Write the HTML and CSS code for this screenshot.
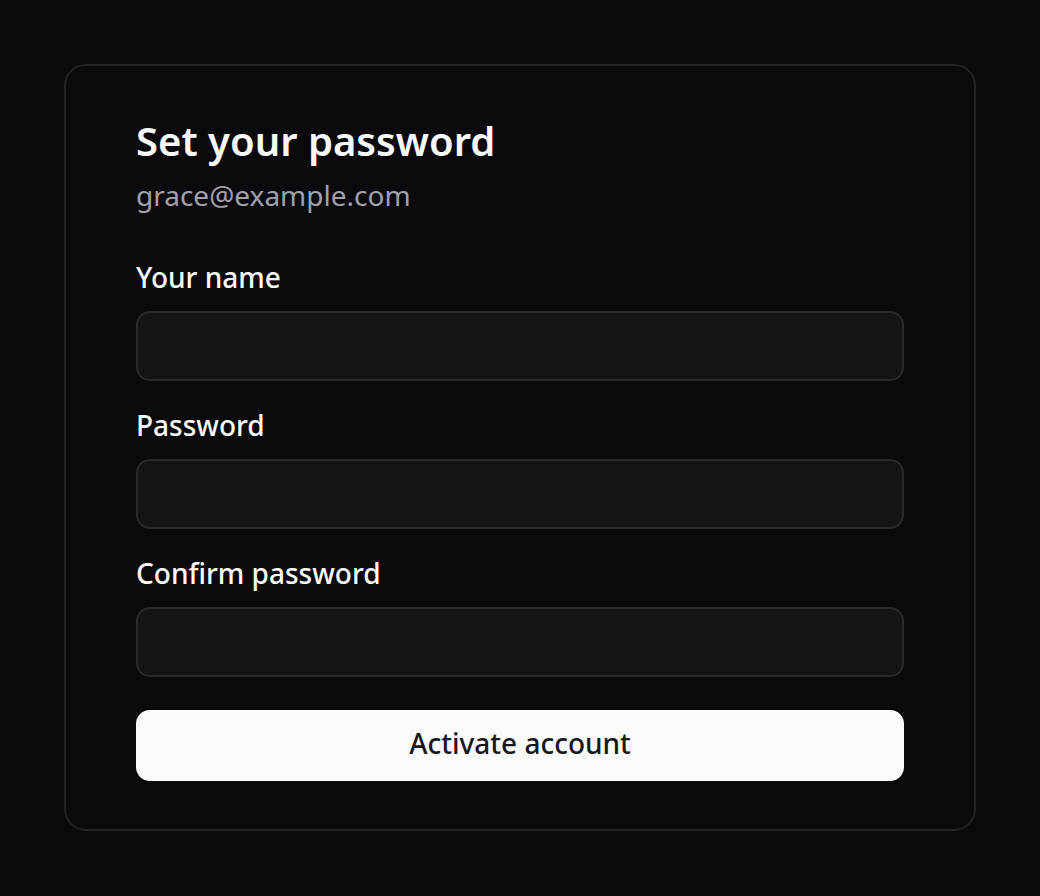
FILE: index.html
```html
<!DOCTYPE html>
<html lang="en">
<head>
    <meta charset="UTF-8">
    <title>Set your password</title>
    <link rel="stylesheet" href="styles.css">
</head>
<body>
    <!-- Activation card -->
    <div class="card">
        <h1 class="card-title">Set your password</h1>
        <p class="card-email">grace@example.com</p>

        <form class="form">
            <div class="field">
                <label class="field-label" for="name">Your name</label>
                <input class="field-input" id="name" type="text">
            </div>
            <div class="field">
                <label class="field-label" for="password">Password</label>
                <input class="field-input" id="password" type="password">
            </div>
            <div class="field">
                <label class="field-label" for="confirm">Confirm password</label>
                <input class="field-input" id="confirm" type="password">
            </div>
            <button class="submit-btn" type="button">Activate account</button>
        </form>
    </div>
</body>
</html>
```

FILE: styles.css
```css
html, body {
    margin: 0;
    padding: 0;
    background: #0a0a0c; /* near black page */
    font-family: "Noto Sans", "Open Sans", sans-serif;
    color: #fafafa;
}

body {
    padding-top: 64px;
}

/* Card */
.card {
    box-sizing: border-box;
    width: 912px;
    margin: 0 auto;
    padding: 51px 70px 48px;
    border: 2px solid #232326;
    border-radius: 22px;
    background: #0a0a0c;
}

.card-title {
    margin: 0;
    font-size: 40px;
    font-weight: 600;
    line-height: 48px;
    color: #fafafa;
}

.card-email {
    margin: 9px 0 0;
    font-size: 28px;
    line-height: 42px;
    color: #a1a1aa; /* muted grey */
}

/* Form */
.form {
    display: flex;
    flex-direction: column;
    gap: 23px;
    margin-top: 40px;
}

.field {
    display: flex;
    flex-direction: column;
    gap: 13px;
}

.field-label {
    font-size: 28px;
    font-weight: 500;
    line-height: 42px;
    color: #fafafa;
}

.field-input {
    box-sizing: border-box;
    height: 70px;
    width: 100%;
    padding: 0 20px;
    border: 2px solid #29292d;
    border-radius: 14px;
    background: #141416;
    color: #fafafa;
    font-family: inherit;
    font-size: 28px;
    outline: none;
}

.submit-btn {
    height: 71px;
    margin-top: 10px;
    padding-bottom: 6px;
    border: none;
    border-radius: 14px;
    background: #fafafa;
    color: #18181b;
    font-family: inherit;
    font-size: 28px;
    font-weight: 500;
    cursor: pointer;
}
```
